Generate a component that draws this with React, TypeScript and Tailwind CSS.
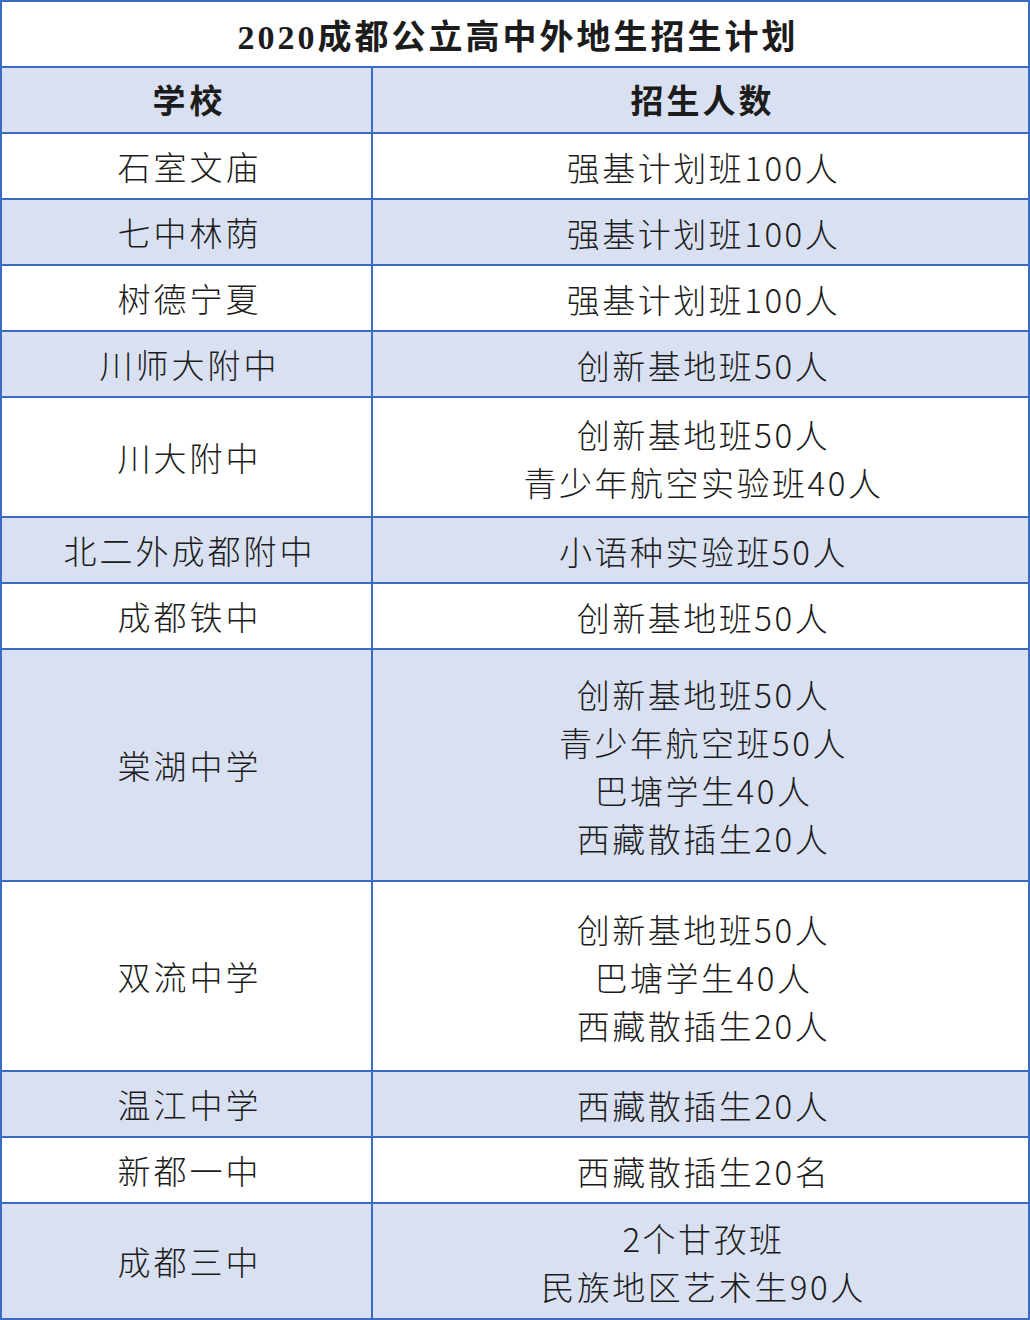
import React from "react";

type Row = {
    school: string;
    plans: string[];
    h: string;
    shaded: boolean;
};

const rows: Row[] = [
    { school: "石室文庙", plans: ["强基计划班100人"], h: "h-[66px]", shaded: false },
    { school: "七中林荫", plans: ["强基计划班100人"], h: "h-[66px]", shaded: true },
    { school: "树德宁夏", plans: ["强基计划班100人"], h: "h-[66px]", shaded: false },
    { school: "川师大附中", plans: ["创新基地班50人"], h: "h-[66px]", shaded: true },
    { school: "川大附中", plans: ["创新基地班50人", "青少年航空实验班40人"], h: "h-[120px]", shaded: false },
    { school: "北二外成都附中", plans: ["小语种实验班50人"], h: "h-[66px]", shaded: true },
    { school: "成都铁中", plans: ["创新基地班50人"], h: "h-[66px]", shaded: false },
    {
        school: "棠湖中学",
        plans: ["创新基地班50人", "青少年航空班50人", "巴塘学生40人", "西藏散插生20人"],
        h: "h-[232px]",
        shaded: true,
    },
    {
        school: "双流中学",
        plans: ["创新基地班50人", "巴塘学生40人", "西藏散插生20人"],
        h: "h-[190px]",
        shaded: false,
    },
    { school: "温江中学", plans: ["西藏散插生20人"], h: "h-[66px]", shaded: true },
    { school: "新都一中", plans: ["西藏散插生20名"], h: "h-[66px]", shaded: false },
    { school: "成都三中", plans: ["2个甘孜班", "民族地区艺术生90人"], h: "h-[116px]", shaded: true },
];

const font = "font-['Noto_Sans_CJK_SC',sans-serif]";
const titleFont = "font-['Liberation_Serif','Noto_Sans_CJK_SC',serif]";

export default function App() {
    return (
        <div className="w-[1030px] h-[1320px] bg-white">
            <table className={`w-[1030px] border-collapse table-fixed ${font} text-[#1c1c1c]`}>
                <colgroup>
                    <col className="w-[371px]" />
                    <col />
                </colgroup>
                <tbody>
                    <tr className="h-[66px]">
                        <td
                            colSpan={2}
                            className={`border-2 border-[#3b6cc4] pt-[6px] pl-[6px] text-center text-[34px] font-bold tracking-[3px] ${titleFont}`}
                        >
                            2020成都公立高中外地生招生计划
                        </td>
                    </tr>
                    <tr className="h-[66px] bg-[#d9e0f1]">
                        <td className="border-2 border-[#3b6cc4] pl-[6px] text-center text-[33px] font-bold tracking-[4px]">
                            学校
                        </td>
                        <td className="border-2 border-[#3b6cc4] pl-[4px] text-center text-[33px] font-bold tracking-[3px]">
                            招生人数
                        </td>
                    </tr>
                    {rows.map((r) => (
                        <tr key={r.school} className={`${r.h} ${r.shaded ? "bg-[#d9e0f1]" : "bg-white"}`}>
                            <td className="border-2 border-[#3b6cc4] pt-[2px] pl-[6px] text-center text-[33px] font-light tracking-[3px]">
                                {r.school}
                            </td>
                            <td className="border-2 border-[#3b6cc4] pt-[2px] pl-[6px] text-center text-[33px] font-light tracking-[2.5px] leading-[48px]">
                                {r.plans.map((p) => (
                                    <div key={p}>{p}</div>
                                ))}
                            </td>
                        </tr>
                    ))}
                </tbody>
            </table>
        </div>
    );
}
